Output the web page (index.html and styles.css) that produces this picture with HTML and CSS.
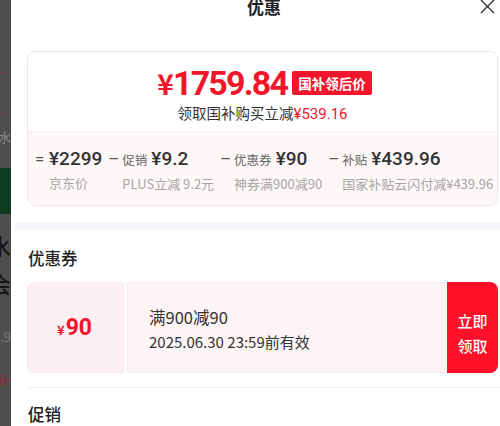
FILE: index.html
```html
<!DOCTYPE html>
<html lang="zh-CN">

<head>
  <meta charset="UTF-8">
  <meta name="viewport" content="width=device-width, initial-scale=1.0">
  <title>优惠</title>
  <link rel="stylesheet" href="styles.css">
</head>

<body>
  <div class="page">
    <!-- product page behind the dimmed overlay -->
    <div class="backdrop">
      <div class="bd-line bd-line-1"></div>
      <div class="bd-line bd-line-2"></div>
      <div class="bd-text bd-small">净水</div>
      <div class="bd-green"></div>
      <div class="bd-text bd-big">净水</div>
      <div class="bd-text bd-big bd-big-2">机会</div>
      <div class="bd-text bd-small bd-small-2">9.9</div>
      <div class="bd-text bd-red">国补</div>
    </div>

    <div class="sheet">
      <div class="sheet-head">
        <h3 class="sheet-title">优惠</h3>
        <svg class="close" width="15" height="15" viewBox="0 0 15 15">
          <path d="M1 1 L14 14 M14 1 L1 14" stroke="#333" stroke-width="1.4" fill="none" />
        </svg>
      </div>

      <div class="price-card">
        <div class="price-main">
          <div class="price-line">
            <span class="price"><small>¥</small>1759.84</span>
            <span class="price-tag">国补领后价</span>
          </div>
          <div class="price-save">领取国补购买立减<em>¥539.16</em></div>
        </div>

        <div class="breakdown">
          <div class="part">
            <span class="op">=</span>
            <div class="part-body">
              <div class="part-val">¥2299</div>
              <div class="part-note">京东价</div>
            </div>
          </div>
          <div class="part">
            <span class="op">–</span>
            <div class="part-body">
              <div class="part-val"><span class="part-label">促销</span>¥9.2</div>
              <div class="part-note">PLUS立减 9.2元</div>
            </div>
          </div>
          <div class="part">
            <span class="op">–</span>
            <div class="part-body">
              <div class="part-val"><span class="part-label">优惠券</span>¥90</div>
              <div class="part-note">神券满900减90</div>
            </div>
          </div>
          <div class="part">
            <span class="op">–</span>
            <div class="part-body">
              <div class="part-val"><span class="part-label">补贴</span>¥439.96</div>
              <div class="part-note">国家补贴云闪付减¥439.96</div>
            </div>
          </div>
        </div>
      </div>

      <div class="band"></div>

      <h4 class="section-title">优惠券</h4>
      <div class="coupon">
        <div class="coupon-amount"><small>¥</small>90</div>
        <div class="coupon-info">
          <div class="coupon-rule">满900减90</div>
          <div class="coupon-date">2025.06.30 23:59前有效</div>
        </div>
        <button class="coupon-btn">立即<br>领取</button>
      </div>

      <div class="rule"></div>
      <h4 class="section-title section-title-last">促销</h4>
    </div>
  </div>
</body>

</html>
```

FILE: styles.css
```css
* {
  box-sizing: border-box;
  margin: 0;
  padding: 0;
  font-family: 'Noto Sans CJK SC', 'Noto Sans', sans-serif;
}

body {
  width: 500px;
  height: 426px;
  overflow: hidden;
  background: #fff;
}

.page {
  display: flex;
  height: 426px;
}

/* dimmed page on the left */
.backdrop {
  width: 11px;
  flex-shrink: 0;
  background: #4e4e4e;
  overflow: hidden;
  display: flex;
  flex-direction: column;
}

.bd-line {
  height: 1px;
  background: #6a4046;
}

.bd-line-1 {
  margin-top: 72px;
}

.bd-line-2 {
  margin-top: 40px;
}

.bd-text {
  display: flex;
  justify-content: flex-end;
  white-space: nowrap;
}

.bd-small {
  margin-top: 14px;
  font-size: 13px;
  line-height: 18px;
  color: #8a8a8a;
}

.bd-green {
  margin-top: 22px;
  height: 46px;
  background: #0d3b1f;
}

.bd-big {
  margin-top: 12px;
  font-size: 22px;
  line-height: 38px;
  color: #141414;
  font-weight: 500;
}

.bd-big-2 {
  margin-top: 0;
}

.bd-small-2 {
  margin-top: 26px;
  color: #777;
}

.bd-red {
  margin-top: 24px;
  font-size: 13px;
  color: #8e2b30;
}

/* bottom sheet */
.sheet {
  flex: 1;
  background: #fff;
  padding: 0 2px 0 16px;
  display: flex;
  flex-direction: column;
}

.sheet-head {
  display: grid;
  grid-template-columns: 1fr auto 1fr;
  align-items: start;
  margin-top: -3px;
  height: 56px;
}

.sheet-title {
  grid-column: 2;
  font-size: 17px;
  line-height: 20px;
  font-weight: 600;
  color: #222;
  padding-left: 3px;
}

.close {
  grid-column: 3;
  justify-self: end;
  margin-top: 2px;
  margin-right: 3px;
}

.price-card {
  border: 1px solid #f2e6e8;
  border-radius: 8px;
  overflow: hidden;
}

.price-main {
  padding: 12px 0 6px;
  text-align: center;
}

.price-line {
  display: flex;
  justify-content: center;
  align-items: center;
  gap: 5px;
}

.price {
  font-family: Roboto, 'Noto Sans', sans-serif;
  font-size: 34px;
  line-height: 38px;
  font-weight: 700;
  letter-spacing: -1.8px;
  color: #f2152b;
  padding-left: 4px;
}

.price small {
  font-size: 28px;
  margin-right: 1px;
}

.price-tag {
  background: #f2152b;
  color: #fff;
  font-size: 13.5px;
  font-weight: 700;
  line-height: 24px;
  padding: 0 6px;
  border-radius: 2px;
  margin-top: 1px;
}

.price-save {
  font-size: 14.5px;
  line-height: 22px;
  color: #333;
}

.price-save em {
  font-style: normal;
  font-family: Roboto, 'Noto Sans', sans-serif;
  font-size: 15px;
  color: #f2152b;
}

.breakdown {
  background: #fdf7f8;
  border-top: 1px solid #f7eef0;
  display: flex;
  gap: 6px;
  padding: 15px 0 20px 7px;
}

.part {
  display: flex;
  align-items: flex-start;
}

.op {
  width: 14px;
  font-family: Roboto, sans-serif;
  font-size: 17px;
  line-height: 24px;
  color: #555;
}

.part-val {
  font-family: Roboto, 'Noto Sans CJK SC', sans-serif;
  font-size: 19px;
  line-height: 24px;
  font-weight: 500;
  color: #333;
  white-space: nowrap;
}

.part-label {
  font-family: 'Noto Sans CJK SC', sans-serif;
  font-size: 12.5px;
  font-weight: 400;
  color: #666;
  margin-right: 4px;
}

.part-note {
  margin-top: 4px;
  font-size: 13px;
  line-height: 16px;
  color: #a6a6a6;
  white-space: nowrap;
}

.band {
  height: 8px;
  background: #f5f6f9;
  margin: 17px -2px 0 -12px;
}

.section-title {
  font-size: 16.5px;
  line-height: 24px;
  font-weight: 500;
  color: #222;
  margin-top: 16px;
  padding-left: 1px;
}

.section-title-last {
  margin-top: 14px;
}

.coupon {
  display: flex;
  height: 95px;
  margin-top: 12px;
}

.coupon-amount {
  width: 97px;
  background: #fdf0f2;
  border: 1px solid #f8e6ea;
  border-radius: 8px 2px 2px 8px;
  display: flex;
  align-items: center;
  justify-content: center;
  font-family: Roboto, sans-serif;
  font-size: 23px;
  font-weight: 700;
  color: #f2152b;
  padding-right: 2px;
}

.coupon-amount small {
  font-size: 13px;
  margin-top: 4px;
  margin-right: 1px;
}

.coupon-info {
  flex: 1;
  margin-left: 3px;
  background: #fdf4f5;
  border: 1px solid #f8eaec;
  border-right: none;
  border-radius: 2px 0 0 2px;
  padding: 22px 0 0 21px;
  color: #333;
}

.coupon-rule {
  font-size: 16.5px;
  line-height: 24px;
}

.coupon-date {
  font-size: 15px;
  line-height: 24px;
  margin-top: 1px;
}

.coupon-btn {
  width: 51px;
  border: none;
  background: #ff1029;
  color: #fff;
  font-size: 15px;
  line-height: 25px;
  font-weight: 500;
  padding-top: 10px;
  border-radius: 0 8px 8px 0;
}

.rule {
  height: 1px;
  background: #efefef;
  margin: 14px -2px 0 0;
}
```
